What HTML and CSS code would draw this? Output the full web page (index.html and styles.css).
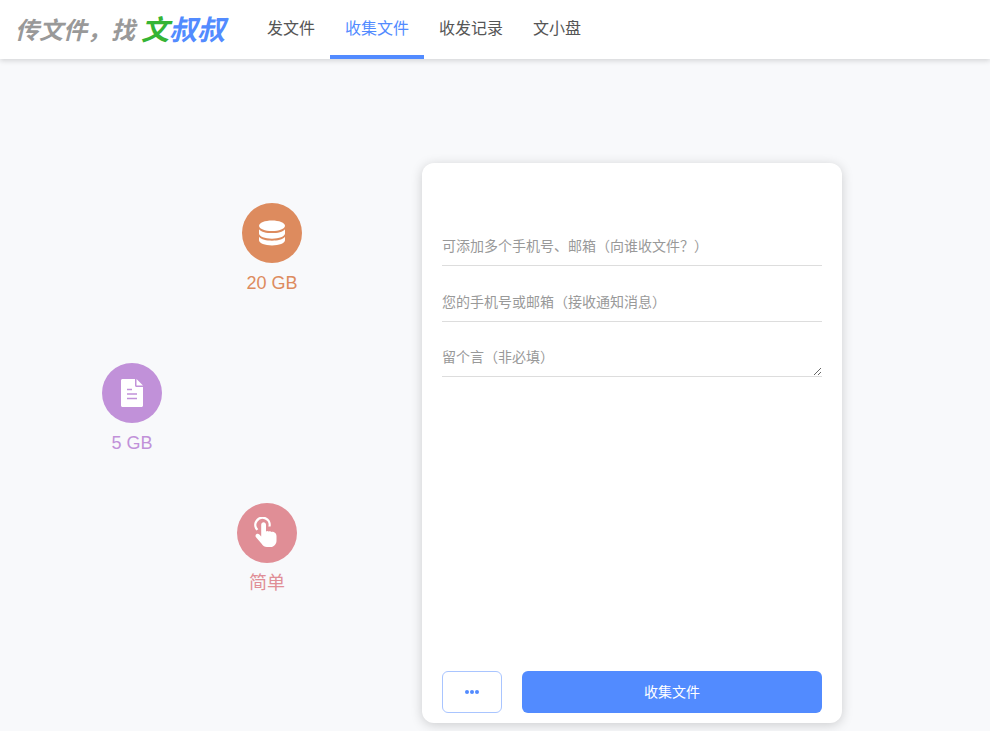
FILE: index.html
```html
<!DOCTYPE html>
<html lang="zh-CN">
<head>
<meta charset="utf-8">
<title>文叔叔</title>
<link rel="stylesheet" href="styles.css">
</head>
<body>
<header class="topbar">
  <a class="logo"><span class="slogan">传文件，找</span><span class="brand"><span class="brand-green">文</span><span class="brand-blue">叔叔</span></span></a>
  <nav class="tabs">
    <a class="tab">发文件</a>
    <a class="tab active">收集文件</a>
    <a class="tab">收发记录</a>
    <a class="tab">文小盘</a>
  </nav>
</header>
<main class="stage">
  <div class="feature f-storage">
    <div class="bubble">
      <svg width="28" height="28" viewBox="0 0 28 28" fill="#fff"><path d="M14 1.500c7 0 13 2.200 13 5.300s-6 5.300-13 5.300S1 9.900 1 6.800 7 1.500 14 1.500z"/><path d="M1 10.200c2 2.700 7.500 3.900 13 3.900s11-1.200 13-3.900v4.300c0 3-6 5.200-13 5.200S1 17.500 1 14.500z"/><path d="M1 17.800c2 2.700 7.500 3.900 13 3.900s11-1.200 13-3.900v3.500c0 3-6 5.200-13 5.200S1 24.300 1 21.300z"/></svg>
    </div>
    <span class="label">20 GB</span>
  </div>
  <div class="feature f-size">
    <div class="bubble">
      <svg width="22" height="28" viewBox="0 0 22 28"><path fill="#fff" d="M1.500 0H14v6.500c0 .8.700 1.500 1.500 1.500H22v18.500c0 .8-.7 1.500-1.500 1.500H1.500C.7 28 0 27.300 0 26.500V1.500C0 .7.700 0 1.500 0z"/><path fill="#fff" d="M15.500 0L22 6.500h-6.500z"/><path stroke="#c191d9" stroke-width="1.300" d="M6 10.500h5M6 15h10M6 19.500h10"/></svg>
    </div>
    <span class="label">5 GB</span>
  </div>
  <div class="feature f-easy">
    <div class="bubble">
      <svg width="28" height="32" viewBox="0 0 28 32" fill="#fff"><path d="M3.300 13.400A8.300 8.300 0 1 1 17.600 9.500l-2.300.1A6 6 0 1 0 5.300 12.200z"/><path d="M8.200 7.800c0-1.500 1.100-2.500 2.400-2.500s2.400 1 2.400 2.500v6.600c.7-.7 2-.7 2.800.2.700-.6 2.200-.5 2.900.5.900-.5 2.400-.3 3.100.7.600.3 1.700 1.400 1.700 3.200v4.700c0 3-2.200 6.300-6 6.300h-3.500c-2.500 0-3.800-1.100-5.400-3.200L3 20.200c-.8-1-.6-2.300.3-3 .9-.8 2.300-.6 3.100.3l1.800 2.100z"/></svg>
    </div>
    <span class="label">简单</span>
  </div>
  <form class="card">
    <div class="fields">
      <div class="field"><input class="line-input" type="text" placeholder="可添加多个手机号、邮箱（向谁收文件？）"></div>
      <div class="field"><input class="line-input" type="text" placeholder="您的手机号或邮箱（接收通知消息）"></div>
      <div class="field"><textarea class="line-input note" placeholder="留个言（非必填）"></textarea></div>
    </div>
    <div class="actions">
      <button class="more" type="button"><i></i><i></i><i></i></button>
      <button class="submit" type="button">收集文件</button>
    </div>
  </form>
</main>
</body>
</html>
```
FILE: styles.css
```css
* { box-sizing: border-box; }
html, body { height: 100%; }
body {
  margin: 0;
  background: #f8f9fb;
  font-family: "Noto Sans CJK SC", "Liberation Sans", sans-serif;
  overflow: hidden;
}
.topbar {
  height: 59px;
  background: #fff;
  box-shadow: 0 2px 5px rgba(0, 0, 0, 0.14);
  display: flex;
  align-items: stretch;
  padding-left: 15px;
  position: relative;
  z-index: 2;
}
.logo {
  display: flex;
  align-items: center;
  width: 237px;
  padding-bottom: 4px;
  font-style: italic;
  font-weight: 700;
  white-space: nowrap;
}
.slogan { font-size: 24px; line-height: 32px; color: #999; margin-top: 3px; }
.brand { font-size: 28px; line-height: 36px; margin-left: 6px; }
.brand-green { color: #35b435; }
.brand-blue { color: #528bff; }
.tabs { display: flex; }
.tab {
  display: block;
  padding: 15px 15px 0;
  font-size: 16px;
  line-height: 24px;
  color: #555;
  border-bottom: 4px solid transparent;
}
.tab.active { color: #528bff; border-bottom-color: #528bff; }
.stage { position: relative; height: 672px; }
.feature {
  position: absolute;
  width: 100px;
  display: flex;
  flex-direction: column;
  align-items: center;
}
.bubble {
  width: 60px;
  height: 60px;
  border-radius: 50%;
  display: flex;
  align-items: center;
  justify-content: center;
}
.label { font: 18px/24px "Liberation Sans", "Noto Sans CJK SC", sans-serif; margin-top: 8px; }
.f-storage { left: 222px; top: 144px; color: #dd8b5e; }
.f-storage .bubble { background: #dd8b5e; }
.f-size { left: 82px; top: 304px; color: #c191d9; }
.f-size .bubble { background: #c191d9; }
.f-easy { left: 217px; top: 444px; color: #e08e96; }
.f-easy .bubble { background: #e08e96; }
.card {
  position: absolute;
  left: 422px;
  top: 104px;
  width: 420px;
  height: 560px;
  background: #fff;
  border-radius: 12px;
  box-shadow: 0 2px 12px rgba(0, 0, 0, 0.18);
  padding: 62px 20px 10px;
  display: flex;
  flex-direction: column;
  justify-content: space-between;
}
.fields { display: flex; flex-direction: column; gap: 15px; }
.field { display: flex; }
.line-input {
  display: block;
  width: 100%;
  height: 41px;
  padding: 0;
  border: 0;
  border-bottom: 1px solid #ddd;
  outline: 0;
  background: transparent;
  font-family: "Noto Sans CJK SC", sans-serif;
  font-size: 14px;
}
.line-input::placeholder { color: #999; opacity: 1; }
.note { height: 40px; padding-top: 9px; line-height: 20px; resize: vertical; }
.actions { display: flex; gap: 20px; }
.more {
  width: 60px;
  height: 42px;
  padding: 0;
  background: #fff;
  border: 1px solid #a9c5ff;
  border-radius: 6px;
  display: flex;
  align-items: center;
  justify-content: center;
  gap: 1px;
}
.more i { width: 4px; height: 4px; border-radius: 50%; background: #528bff; }
.submit {
  flex: 1;
  height: 42px;
  padding: 0 0 2px;
  border: 0;
  border-radius: 6px;
  background: #528bff;
  color: #fff;
  font-family: "Noto Sans CJK SC", sans-serif;
  font-size: 14px;
}
```
